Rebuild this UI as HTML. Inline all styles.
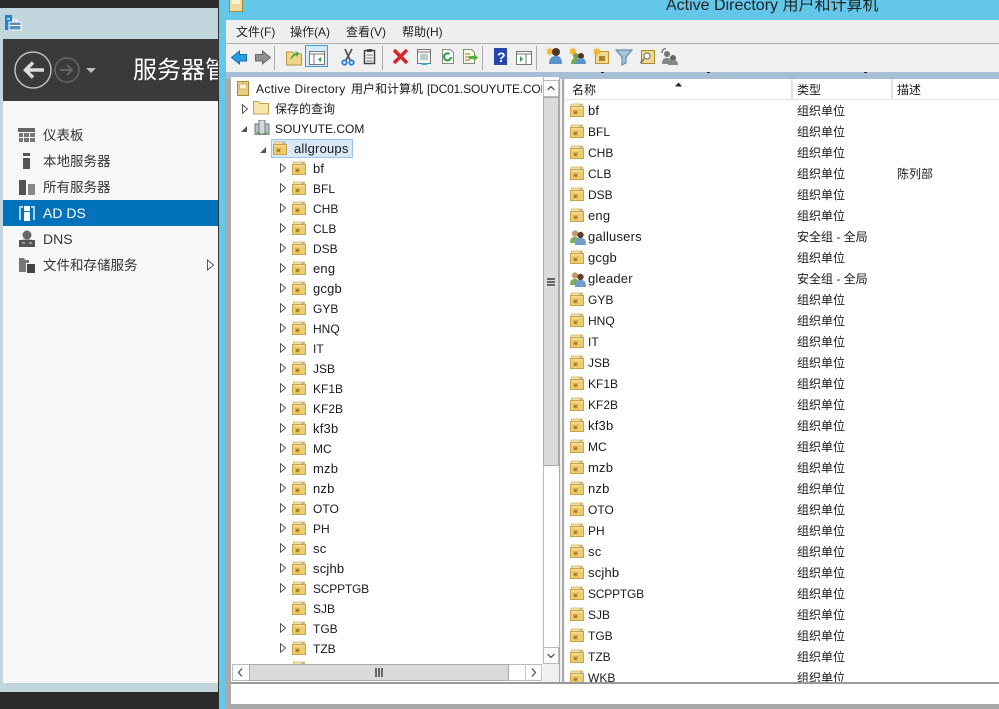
<!DOCTYPE html>
<html lang="zh"><head><meta charset="utf-8"><title>Active Directory</title>
<style>
html,body{margin:0;padding:0}
body{width:999px;height:709px;overflow:hidden;position:relative;background:#63c7ea;font-family:"Liberation Sans","Noto Sans CJK SC",sans-serif;font-size:12px;color:#1a1a1a}
div,svg,span{position:absolute}
.t{white-space:nowrap;line-height:20px;height:20px}
.r{left:0;height:21px;width:434px}
.r svg{left:5px;top:3px}
.r .t,.a .t{top:1px}
.r .n{left:23px}.r .y{left:232px}.r .d{left:332px}
.a{left:0;height:20px;width:310px}
.a svg.f{left:61px;top:3px}
.a svg.e{left:48px;top:5px}
.a .n{left:82px}
.l{font-size:13px;letter-spacing:.2px}
.m{color:#222;font-size:12px;line-height:22px;white-space:nowrap}
.s{font-size:13.5px;line-height:26px;color:#333;white-space:nowrap;left:43px;margin-top:1px}
.sep{width:1px;height:24px;top:46px;background:#aaa}
</style></head><body>
<svg width="0" height="0" style="left:0;top:0"><defs>
<symbol id="ou" viewBox="0 0 14 14"><rect x="1.500" y="1" width="11" height="4" fill="#f6e3a4" stroke="#d4b264" stroke-width=".8"/><rect x="9.500" y="1.500" width="2.500" height="1.500" fill="#8fc0e6"/><rect x=".5" y="3.500" width="13" height="10" fill="#efcb72" stroke="#c9a24f"/><rect x="1" y="4" width="12" height="1.500" fill="#f6dc93"/><rect x="3" y="7" width="5" height="4.500" fill="#d9b24e"/><rect x="4.200" y="8.500" width="2.600" height="2" fill="#8a6d1e"/></symbol>
<symbol id="ex" viewBox="0 0 8 10"><path d="M1.500 .8L6.500 5L1.500 9.200z" fill="#fff" stroke="#555"/></symbol>
<symbol id="gr" viewBox="0 0 16 16"><circle cx="5" cy="4.500" r="3.200" fill="#c99a6a"/><path d="M0 14c0-5 2-6 5-6s4 1 4 6z" fill="#7fae5a"/><circle cx="10.500" cy="6" r="3.200" fill="#5a4030"/><path d="M5 16c0-6 2-7 5.500-7s5.500 1 5.500 7z" fill="#6f9cc8"/></symbol>
</defs></svg>

<!-- left window -->
<div style="left:0;top:0;width:219px;height:709px;background:#2b2b2b"></div>
<div style="left:0;top:8px;width:218px;height:684px;background:#c0d5dc"></div>
<svg style="left:5px;top:15px" width="17" height="16" viewBox="0 0 17 16"><rect x="0" y="0" width="7" height="15" fill="#1a84d6"/><rect x="2" y="3" width="3" height="1.500" fill="#fff"/><rect x="4" y="7" width="12" height="8" fill="#5b8fb5" stroke="#fff"/><path d="M8 7V5h4v2" fill="none" stroke="#fff"/><path d="M4 10.500h12" stroke="#fff"/></svg>
<div style="left:3px;top:39px;width:215px;height:62px;background:#3a3a3a"></div>
<svg style="left:14px;top:50px" width="84" height="40" viewBox="0 0 84 40"><circle cx="19" cy="20" r="18" fill="none" stroke="#c0c0c0" stroke-width="1.500"/><path d="M30 20H11M19 12.500l-7.500 7.500 7.500 7.500" fill="none" stroke="#dcdcdc" stroke-width="3.500"/><circle cx="53" cy="20" r="12" fill="none" stroke="#666" stroke-width="1.500"/><path d="M46 20h12M53 15l5 5-5 5" fill="none" stroke="#666" stroke-width="2"/><path d="M72 18h10l-5 5z" fill="#c0c0c0"/></svg>
<div style="left:133px;top:54px;width:85px;height:34px;overflow:hidden;color:#fff;font-size:24px;line-height:34px;white-space:nowrap">服务器管理器</div>
<div style="left:3px;top:101px;width:215px;height:582px;background:#f7f7f7"></div>
<div style="left:3px;top:200px;width:215px;height:26px;background:#0072bc"></div>
<div style="left:218px;top:0;width:1px;height:709px;background:#333"></div>

<svg style="left:18px;top:127px" width="18" height="16"><rect width="17" height="4" y="1" fill="#666"/><path d="M1 6h4v4H1zM6 6h5v4H6zM12 6h5v4h-5zM1 11h4v4H1zM6 11h5v4H6zM12 11h5v4h-5z" fill="#777"/></svg>
<svg style="left:18px;top:153px" width="18" height="16"><rect x="5" y="0" width="7" height="3" fill="#555"/><rect x="5" y="5" width="7" height="11" fill="#555"/></svg>
<svg style="left:18px;top:179px" width="18" height="16"><rect x="1" y="1" width="7" height="15" fill="#555"/><rect x="10" y="5" width="7" height="11" fill="#888"/></svg>
<svg style="left:18px;top:205px" width="18" height="16"><path d="M1 1h4v2H3v12H1zM17 1h-4v2h2v12h2z" fill="#a9d4ee"/><rect x="6" y="1" width="6" height="5" fill="#fff"/><rect x="6" y="7" width="6" height="9" fill="#fff"/></svg>
<svg style="left:18px;top:230px" width="18" height="17"><circle cx="9" cy="5" r="4.500" fill="#666"/><path d="M4 10c1-1 9-1 10 0z" fill="#888"/><rect x="1" y="10" width="16" height="7" fill="#555"/><path d="M4 13h3M11 13h3" stroke="#ddd"/></svg>
<svg style="left:18px;top:257px" width="18" height="16"><path d="M1 1h5l1 2h4v3H8v9H1z" fill="#777"/><rect x="9" y="7" width="8" height="9" fill="#444"/></svg>

<div class="s" style="top:122px">仪表板</div>
<div class="s" style="top:148px">本地服务器</div>
<div class="s" style="top:174px">所有服务器</div>
<div class="s" style="top:199px;color:#fff;font-size:14px">AD DS</div>
<div class="s" style="top:225px;font-size:14px">DNS</div>
<div class="s" style="top:252px">文件和存储服务</div>
<svg style="left:206px;top:259px" width="9" height="12"><path d="M1.500 1L7.500 6 1.500 11z" fill="#fff" stroke="#555"/></svg>

<!-- main window -->
<div style="left:226px;top:20px;width:773px;height:689px;background:#a9a9a9"></div>
<svg style="left:229px;top:-4px" width="14" height="16"><rect x=".5" y=".5" width="13" height="15" fill="#efdc9a" stroke="#a98a34"/><rect x="3" y="3" width="8" height="5" fill="#fbf3cf"/></svg>
<div class="t" style="left:666px;top:-4px;font-size:16px;color:#222">Active Directory 用户和计算机</div>
<div style="left:226px;top:20px;width:773px;height:23px;background:#eeeeee"></div>
<div style="left:226px;top:43px;width:773px;height:1px;background:#b0b0b0"></div>
<div style="left:226px;top:44px;width:773px;height:28px;background:#f0f0f0"></div>
<div style="left:226px;top:72px;width:773px;height:7px;background:#a8bdd6"></div>
<div style="left:601px;top:72px;width:3px;height:1px;background:#222"></div>
<div style="left:707px;top:72px;width:3px;height:1px;background:#222"></div>
<div style="left:864px;top:72px;width:3px;height:1px;background:#222"></div>
<div class="m" style="left:236px;top:21px">文件(F)</div>
<div class="m" style="left:290px;top:21px">操作(A)</div>
<div class="m" style="left:346px;top:21px">查看(V)</div>
<div class="m" style="left:402px;top:21px">帮助(H)</div>

<!-- toolbar -->
<svg style="left:226px;top:44px" width="773" height="28" viewBox="226 44 773 28">
<path d="M231.500 57.500l8-6.500v3.500h7v6.500h-7v3z" fill="#2d9be0" stroke="#1470b5"/>
<path d="M270.500 57.500l-8-6.500v3.500h-7v6.500h7v3z" fill="#8f8f8f" stroke="#666"/>
<path d="M286.500 52h6l2 2h7v11h-15z" fill="#f0d68c" stroke="#b8963e"/><path d="M290 60c1-4 3-6 6-7l-1-2 4 2-2 4-1-2c-2 1-4 3-6 5z" fill="#47a838"/>
<rect x="305.500" y="45.500" width="22" height="21" fill="#d5e9f7" stroke="#3d9bdc"/><rect x="309.500" y="51.500" width="15" height="13" fill="#fff" stroke="#777"/><path d="M309 54h16M314 54v11" stroke="#777"/><path d="M321 57v5l-3-2.500z" fill="#2ea043"/>
<path d="M352 49l-6 11M345 49l5 11" stroke="#555" stroke-width="1.800"/><circle cx="344.500" cy="62.500" r="2.200" fill="none" stroke="#2c7fd0" stroke-width="1.800"/><circle cx="351.500" cy="62.500" r="2.200" fill="none" stroke="#2c7fd0" stroke-width="1.800"/>
<rect x="364.500" y="50.500" width="10" height="13" fill="#f3f3f3" stroke="#444" stroke-width="1.500"/><rect x="367" y="49" width="5" height="3" fill="#444"/><path d="M366.500 55h6M366.500 58h6M366.500 61h6" stroke="#777"/>
<path d="M394 50l13 13M407 50l-13 13" stroke="#d8262c" stroke-width="3.500"/>
<rect x="417.500" y="49.500" width="13" height="14" fill="#f5f5f5" stroke="#777"/><path d="M418 52h12" stroke="#777"/><path d="M420 55h8M420 57h8M420 59h8" stroke="#7aa"/><rect x="422" y="63" width="5" height="2" fill="#2aa8e0"/>
<path d="M442.500 49.500h8l3 3v11h-11z" fill="#fafafa" stroke="#888"/><path d="M451 57a3.500 3.500 0 1 1-1.500-3" fill="none" stroke="#2ea043" stroke-width="2"/>
<path d="M463.500 49.500h8l3 3v11h-11z" fill="#fdf8d8" stroke="#888"/><path d="M465 54h5M465 57h5M465 60h5" stroke="#777"/><path d="M469 56h5v-2l4 3.500-4 3.500v-2h-5z" fill="#54ae3a"/>
<rect x="494" y="48" width="13" height="17" fill="#2748a8"/><text x="497" y="62" fill="#fff" font-size="14" font-weight="700" font-family="Liberation Sans">?</text>
<rect x="516.500" y="51.500" width="15" height="13" fill="#fff" stroke="#777"/><path d="M517 54h15M526 54v11" stroke="#777"/><path d="M520 56v6l3-3z" fill="#2ea043"/>
<path d="M550 47l1.200 2.300 2.500 0-1.200 2.200 1.200 2.200-2.500 0-1.200 2.300-1.200-2.300-2.500 0 1.200-2.200-1.200-2.200 2.500 0z" fill="#f5b731"/><circle cx="556" cy="52" r="4" fill="#4a3528"/><path d="M549 64c0-6 3-8 7-8s6 2 6 8z" fill="#5b93cf"/>
<path d="M573 47l1.200 2.300 2.500 0-1.200 2.200 1.200 2.200-2.500 0-1.200 2.300-1.200-2.300-2.500 0 1.200-2.200-1.200-2.200 2.500 0z" fill="#f5b731"/><circle cx="576" cy="56" r="3" fill="#7aa35a"/><path d="M571 64c0-4 2-6 5-6s4 2 4 6z" fill="#75a850"/><circle cx="581" cy="56" r="3" fill="#4a3528"/><path d="M576 64c0-4 2-6 5-6s5 2 5 6z" fill="#5b93cf"/>
<rect x="595.500" y="51.500" width="13" height="12" fill="#f2d88f" stroke="#b8963e"/><rect x="599" y="56" width="6" height="5" fill="#a5832c"/><path d="M597 47l1.200 2.300 2.500 0-1.200 2.200 1.200 2.200-2.500 0-1.200 2.300-1.200-2.300-2.500 0 1.200-2.200-1.200-2.200 2.500 0z" fill="#f5b731"/>
<path d="M616 50h16l-6 7v6l-4 2v-8z" fill="#a9c3d6" stroke="#55819f"/>
<rect x="641.500" y="50.500" width="13" height="13" fill="#f0d88c" stroke="#a98a34"/><circle cx="647" cy="56" r="3" fill="#fff" stroke="#666"/><path d="M644 59l-3.500 4" stroke="#666" stroke-width="1.500"/>
<circle cx="667" cy="54" r="3" fill="#777"/><circle cx="673" cy="58" r="3" fill="#666"/><path d="M662 64c0-5 2-6 5-6s4 1 4 6zM668 65c0-4 2-5 5-5s5 1 5 5z" fill="#888"/><path d="M662 53c0-3 2-5 4-4" fill="none" stroke="#555"/>
</svg>
<div class="sep" style="left:274px"></div><div class="sep" style="left:382px"></div><div class="sep" style="left:482px"></div><div class="sep" style="left:536px"></div>

<!-- status bar -->
<div style="left:231px;top:684px;width:768px;height:20px;background:#fff"></div>
<div style="left:231px;top:682px;width:768px;height:2px;background:#9a9a9a"></div>
<div style="left:559px;top:79px;width:6px;height:603px;background:#f0f0f0"></div>
<div style="left:562px;top:79px;width:2px;height:603px;background:#aaa"></div>

<!-- tree -->
<div style="left:231px;top:77px;width:328px;height:605px;background:#fff;border-right:1px solid #aaa;overflow:hidden">
<div style="left:0;top:0;width:328px;height:587px;overflow:hidden">
<svg style="left:6px;top:4px" width="12" height="15"><rect x=".5" y=".5" width="11" height="14" fill="#e6d083" stroke="#a98a34"/><rect x="2.500" y="3" width="7" height="5" fill="#fbf3cf" stroke="#b89a48" stroke-width=".6"/></svg>
<div style="left:0;top:0;width:311px;height:22px;overflow:hidden">
<div class="t" style="left:25px;top:2px;letter-spacing:.35px">Active Directory</div>
<div class="t" style="left:120px;top:2px">用户和计算机</div>
<div class="t" style="left:196px;top:2px;letter-spacing:-.2px">[DC01.SOUYUTE.COM]</div>
</div>
<svg style="left:10px;top:27px" width="8" height="10"><use href="#ex"/></svg>
<svg style="left:22px;top:23px" width="16" height="15"><path d="M.5 14V1.500h5l1.500 2h8.500V14z" fill="#f8e6a8" stroke="#c4a24c"/></svg>
<div class="t" style="left:44px;top:22px">保存的查询</div>
<svg style="left:10px;top:49px" width="7" height="7"><path d="M6 0v6H0z" fill="#555"/></svg>
<svg style="left:23px;top:43px" width="16" height="15"><rect x="1" y="4" width="6" height="11" fill="#b9c1c6" stroke="#6d767c"/><rect x="9" y="4" width="6" height="11" fill="#b9c1c6" stroke="#6d767c"/><rect x="5" y="0" width="6" height="14" fill="#d3dade" stroke="#6d767c"/><rect x="2.500" y="12" width="2" height="2" fill="#4caf50"/><rect x="11" y="12" width="2" height="2" fill="#4caf50"/></svg>
<div class="t" style="left:44px;top:42px">SOUYUTE.COM</div>
<svg style="left:29px;top:70px" width="7" height="7"><path d="M6 0v6H0z" fill="#555"/></svg>
<div style="left:40px;top:62px;width:80px;height:17px;background:#d9e8f9;border:1px solid #9cc3ea"></div>
<svg style="left:42px;top:64px" width="14" height="14"><use href="#ou"/></svg>
<div class="t l" style="left:63px;top:62px">allgroups</div>

<div class="a" style="top:81px"><svg class="e" width="8" height="10"><use href="#ex"/></svg><svg class="f" width="14" height="14"><use href="#ou"/></svg><span class="t n l">bf</span></div>
<div class="a" style="top:101px"><svg class="e" width="8" height="10"><use href="#ex"/></svg><svg class="f" width="14" height="14"><use href="#ou"/></svg><span class="t n">BFL</span></div>
<div class="a" style="top:121px"><svg class="e" width="8" height="10"><use href="#ex"/></svg><svg class="f" width="14" height="14"><use href="#ou"/></svg><span class="t n">CHB</span></div>
<div class="a" style="top:141px"><svg class="e" width="8" height="10"><use href="#ex"/></svg><svg class="f" width="14" height="14"><use href="#ou"/></svg><span class="t n">CLB</span></div>
<div class="a" style="top:161px"><svg class="e" width="8" height="10"><use href="#ex"/></svg><svg class="f" width="14" height="14"><use href="#ou"/></svg><span class="t n">DSB</span></div>
<div class="a" style="top:181px"><svg class="e" width="8" height="10"><use href="#ex"/></svg><svg class="f" width="14" height="14"><use href="#ou"/></svg><span class="t n l">eng</span></div>
<div class="a" style="top:201px"><svg class="e" width="8" height="10"><use href="#ex"/></svg><svg class="f" width="14" height="14"><use href="#ou"/></svg><span class="t n l">gcgb</span></div>
<div class="a" style="top:221px"><svg class="e" width="8" height="10"><use href="#ex"/></svg><svg class="f" width="14" height="14"><use href="#ou"/></svg><span class="t n">GYB</span></div>
<div class="a" style="top:241px"><svg class="e" width="8" height="10"><use href="#ex"/></svg><svg class="f" width="14" height="14"><use href="#ou"/></svg><span class="t n">HNQ</span></div>
<div class="a" style="top:261px"><svg class="e" width="8" height="10"><use href="#ex"/></svg><svg class="f" width="14" height="14"><use href="#ou"/></svg><span class="t n">IT</span></div>
<div class="a" style="top:281px"><svg class="e" width="8" height="10"><use href="#ex"/></svg><svg class="f" width="14" height="14"><use href="#ou"/></svg><span class="t n">JSB</span></div>
<div class="a" style="top:301px"><svg class="e" width="8" height="10"><use href="#ex"/></svg><svg class="f" width="14" height="14"><use href="#ou"/></svg><span class="t n">KF1B</span></div>
<div class="a" style="top:321px"><svg class="e" width="8" height="10"><use href="#ex"/></svg><svg class="f" width="14" height="14"><use href="#ou"/></svg><span class="t n">KF2B</span></div>
<div class="a" style="top:341px"><svg class="e" width="8" height="10"><use href="#ex"/></svg><svg class="f" width="14" height="14"><use href="#ou"/></svg><span class="t n l">kf3b</span></div>
<div class="a" style="top:361px"><svg class="e" width="8" height="10"><use href="#ex"/></svg><svg class="f" width="14" height="14"><use href="#ou"/></svg><span class="t n">MC</span></div>
<div class="a" style="top:381px"><svg class="e" width="8" height="10"><use href="#ex"/></svg><svg class="f" width="14" height="14"><use href="#ou"/></svg><span class="t n l">mzb</span></div>
<div class="a" style="top:401px"><svg class="e" width="8" height="10"><use href="#ex"/></svg><svg class="f" width="14" height="14"><use href="#ou"/></svg><span class="t n l">nzb</span></div>
<div class="a" style="top:421px"><svg class="e" width="8" height="10"><use href="#ex"/></svg><svg class="f" width="14" height="14"><use href="#ou"/></svg><span class="t n">OTO</span></div>
<div class="a" style="top:441px"><svg class="e" width="8" height="10"><use href="#ex"/></svg><svg class="f" width="14" height="14"><use href="#ou"/></svg><span class="t n">PH</span></div>
<div class="a" style="top:461px"><svg class="e" width="8" height="10"><use href="#ex"/></svg><svg class="f" width="14" height="14"><use href="#ou"/></svg><span class="t n l">sc</span></div>
<div class="a" style="top:481px"><svg class="e" width="8" height="10"><use href="#ex"/></svg><svg class="f" width="14" height="14"><use href="#ou"/></svg><span class="t n l">scjhb</span></div>
<div class="a" style="top:501px"><svg class="e" width="8" height="10"><use href="#ex"/></svg><svg class="f" width="14" height="14"><use href="#ou"/></svg><span class="t n" style="letter-spacing:-.2px">SCPPTGB</span></div>
<div class="a" style="top:521px"><svg class="f" width="14" height="14"><use href="#ou"/></svg><span class="t n">SJB</span></div>
<div class="a" style="top:541px"><svg class="e" width="8" height="10"><use href="#ex"/></svg><svg class="f" width="14" height="14"><use href="#ou"/></svg><span class="t n">TGB</span></div>
<div class="a" style="top:561px"><svg class="e" width="8" height="10"><use href="#ex"/></svg><svg class="f" width="14" height="14"><use href="#ou"/></svg><span class="t n">TZB</span></div>
<div class="a" style="top:581px"><svg class="f" width="14" height="14"><use href="#ou"/></svg></div>
</div>
<!-- vertical scrollbar -->
<div style="left:312px;top:0;width:16px;height:587px;background:#fff;border-left:1px solid #bbb"></div>
<div style="left:312px;top:20px;width:16px;height:369px;background:#dadada;border:1px solid #aaa;box-sizing:border-box"></div>
<div style="left:312px;top:3px;width:16px;height:17px;background:#fff;border:1px solid #bbb;box-sizing:border-box"></div>
<div style="left:312px;top:570px;width:16px;height:17px;background:#fff;border:1px solid #bbb;box-sizing:border-box"></div>
<svg style="left:312px;top:3px" width="16" height="17"><path d="M4.500 10l3.500-3.500 3.500 3.500" fill="none" stroke="#555" stroke-width="1.300"/></svg>
<svg style="left:312px;top:570px" width="16" height="17"><path d="M4.500 7l3.500 3.500 3.500-3.500" fill="none" stroke="#555" stroke-width="1.300"/></svg>
<svg style="left:312px;top:199px" width="16" height="12"><path d="M4 2h8v2H4zM4 5h8v2H4zM4 8h8v2H4z" fill="#666"/></svg>
<!-- horizontal scrollbar -->
<div style="left:1px;top:587px;width:310px;height:17px;background:#fff;border:1px solid #bbb;box-sizing:border-box"></div>
<div style="left:312px;top:587px;width:16px;height:18px;background:#f0f0f0"></div>
<div style="left:18px;top:587px;width:260px;height:17px;background:#dadada;border:1px solid #aaa;box-sizing:border-box"></div>
<div style="left:294px;top:587px;width:1px;height:17px;background:#ccc"></div>
<svg style="left:1px;top:587px" width="17" height="17"><path d="M10 4.500l-3.500 4 3.500 4" fill="none" stroke="#555" stroke-width="1.300"/></svg>
<svg style="left:294px;top:587px" width="17" height="17"><path d="M7 4.500l3.500 4-3.500 4" fill="none" stroke="#555" stroke-width="1.300"/></svg>
<svg style="left:143px;top:591px" width="10" height="9"><path d="M1 0h2v9H1zM4 0h2v9H4zM7 0h2v9H7z" fill="#666"/></svg>
</div>

<!-- list -->
<div style="left:565px;top:79px;width:434px;height:603px;background:#fff;overflow:hidden">
<div style="left:0;top:0;width:434px;height:20px;background:#fff;border-bottom:1px solid #e3e3e3"></div>
<div style="left:226px;top:0;width:2px;height:20px;background:#e3e3e3"></div>
<div style="left:326px;top:0;width:2px;height:20px;background:#e3e3e3"></div>
<svg style="left:110px;top:3px" width="8" height="5"><path d="M0 4.500L3.500 .5 7 4.500z" fill="#222"/></svg>
<span class="t" style="left:7px;top:1px">名称</span><span class="t" style="left:232px;top:1px">类型</span><span class="t" style="left:332px;top:1px">描述</span>

<div class="r" style="top:21px"><svg width="14" height="14"><use href="#ou"/></svg><span class="t n l">bf</span><span class="t y">组织单位</span></div>
<div class="r" style="top:42px"><svg width="14" height="14"><use href="#ou"/></svg><span class="t n">BFL</span><span class="t y">组织单位</span></div>
<div class="r" style="top:63px"><svg width="14" height="14"><use href="#ou"/></svg><span class="t n">CHB</span><span class="t y">组织单位</span></div>
<div class="r" style="top:84px"><svg width="14" height="14"><use href="#ou"/></svg><span class="t n">CLB</span><span class="t y">组织单位</span><span class="t d">陈列部</span></div>
<div class="r" style="top:105px"><svg width="14" height="14"><use href="#ou"/></svg><span class="t n">DSB</span><span class="t y">组织单位</span></div>
<div class="r" style="top:126px"><svg width="14" height="14"><use href="#ou"/></svg><span class="t n l">eng</span><span class="t y">组织单位</span></div>
<div class="r" style="top:147px"><svg width="16" height="16"><use href="#gr"/></svg><span class="t n l">gallusers</span><span class="t y">安全组 - 全局</span></div>
<div class="r" style="top:168px"><svg width="14" height="14"><use href="#ou"/></svg><span class="t n l">gcgb</span><span class="t y">组织单位</span></div>
<div class="r" style="top:189px"><svg width="16" height="16"><use href="#gr"/></svg><span class="t n l">gleader</span><span class="t y">安全组 - 全局</span></div>
<div class="r" style="top:210px"><svg width="14" height="14"><use href="#ou"/></svg><span class="t n">GYB</span><span class="t y">组织单位</span></div>
<div class="r" style="top:231px"><svg width="14" height="14"><use href="#ou"/></svg><span class="t n">HNQ</span><span class="t y">组织单位</span></div>
<div class="r" style="top:252px"><svg width="14" height="14"><use href="#ou"/></svg><span class="t n">IT</span><span class="t y">组织单位</span></div>
<div class="r" style="top:273px"><svg width="14" height="14"><use href="#ou"/></svg><span class="t n">JSB</span><span class="t y">组织单位</span></div>
<div class="r" style="top:294px"><svg width="14" height="14"><use href="#ou"/></svg><span class="t n">KF1B</span><span class="t y">组织单位</span></div>
<div class="r" style="top:315px"><svg width="14" height="14"><use href="#ou"/></svg><span class="t n">KF2B</span><span class="t y">组织单位</span></div>
<div class="r" style="top:336px"><svg width="14" height="14"><use href="#ou"/></svg><span class="t n l">kf3b</span><span class="t y">组织单位</span></div>
<div class="r" style="top:357px"><svg width="14" height="14"><use href="#ou"/></svg><span class="t n">MC</span><span class="t y">组织单位</span></div>
<div class="r" style="top:378px"><svg width="14" height="14"><use href="#ou"/></svg><span class="t n l">mzb</span><span class="t y">组织单位</span></div>
<div class="r" style="top:399px"><svg width="14" height="14"><use href="#ou"/></svg><span class="t n l">nzb</span><span class="t y">组织单位</span></div>
<div class="r" style="top:420px"><svg width="14" height="14"><use href="#ou"/></svg><span class="t n">OTO</span><span class="t y">组织单位</span></div>
<div class="r" style="top:441px"><svg width="14" height="14"><use href="#ou"/></svg><span class="t n">PH</span><span class="t y">组织单位</span></div>
<div class="r" style="top:462px"><svg width="14" height="14"><use href="#ou"/></svg><span class="t n l">sc</span><span class="t y">组织单位</span></div>
<div class="r" style="top:483px"><svg width="14" height="14"><use href="#ou"/></svg><span class="t n l">scjhb</span><span class="t y">组织单位</span></div>
<div class="r" style="top:504px"><svg width="14" height="14"><use href="#ou"/></svg><span class="t n" style="letter-spacing:-.2px">SCPPTGB</span><span class="t y">组织单位</span></div>
<div class="r" style="top:525px"><svg width="14" height="14"><use href="#ou"/></svg><span class="t n">SJB</span><span class="t y">组织单位</span></div>
<div class="r" style="top:546px"><svg width="14" height="14"><use href="#ou"/></svg><span class="t n">TGB</span><span class="t y">组织单位</span></div>
<div class="r" style="top:567px"><svg width="14" height="14"><use href="#ou"/></svg><span class="t n">TZB</span><span class="t y">组织单位</span></div>
<div class="r" style="top:588px"><svg width="14" height="14"><use href="#ou"/></svg><span class="t n">WKB</span><span class="t y">组织单位</span></div>
</div>
</body></html>
